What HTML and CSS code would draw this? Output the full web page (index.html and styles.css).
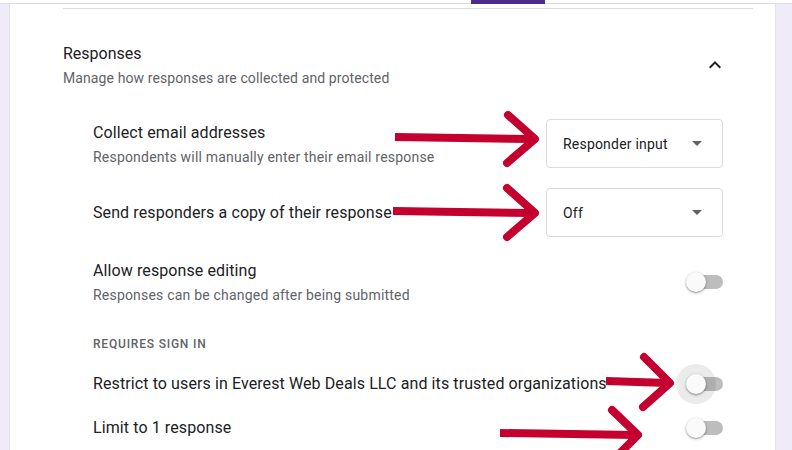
FILE: index.html
```html
<!DOCTYPE html>
<html>
<head>
  <title>Settings - Responses</title>
  <link rel="stylesheet" href="styles.css">
</head>
<body>
  <div class="topbar"><div class="tab-ink"></div></div>

  <div class="card">
    <div class="rule"></div>

    <div class="section-head">
      <div>
        <div class="title">Responses</div>
        <div class="sub">Manage how responses are collected and protected</div>
      </div>
      <svg class="chevron" width="24" height="24" viewBox="0 0 24 24"><path d="M12 8l-6 6 1.41 1.41L12 10.83l4.59 4.58L18 14z"/></svg>
    </div>

    <div class="row first">
      <div>
        <div class="label">Collect email addresses</div>
        <div class="sub wide">Respondents will manually enter their email response</div>
      </div>
      <div class="select"><span>Responder input</span><i class="caret"></i></div>
    </div>

    <div class="row">
      <div class="label">Send responders a copy of their response</div>
      <div class="select"><span>Off</span><i class="caret"></i></div>
    </div>

    <div class="row">
      <div>
        <div class="label">Allow response editing</div>
        <div class="sub wide">Responses can be changed after being submitted</div>
      </div>
      <div class="toggle"><div class="track"></div><div class="knob"></div></div>
    </div>

    <div class="group">Requires sign in</div>

    <div class="row tall">
      <div class="label">Restrict to users in Everest Web Deals LLC and its trusted organizations</div>
      <div class="toggle"><div class="track"></div><div class="halo"></div><div class="knob"></div></div>
    </div>

    <div class="row tall last">
      <div class="label">Limit to 1 response</div>
      <div class="toggle"><div class="track"></div><div class="knob"></div></div>
    </div>
  </div>

  <!-- annotation arrows drawn on top of the screenshot -->
  <svg class="arrows" width="792" height="450" viewBox="0 0 792 450">
    <g fill="none" stroke="#c4002f" stroke-width="8">
      <line x1="395" y1="137" x2="532" y2="139"/>
      <line x1="393" y1="211" x2="532" y2="213"/>
      <line x1="606" y1="381" x2="668" y2="383"/>
      <line x1="500" y1="433" x2="636" y2="435"/>
    </g>
    <g fill="none" stroke="#c4002f" stroke-width="8" stroke-linecap="round" stroke-linejoin="round">
      <polyline points="508,115 535,139 507,163"/>
      <polyline points="507,188 535,213 507,237"/>
      <polyline points="644,357 670,383 643,407"/>
      <polyline points="612,410 638,435 612,461"/>
    </g>
  </svg>
</body>
</html>
```

FILE: styles.css
```css
body {
  margin: 0;
  background-color: #f0ebf8;
  font-family: Roboto, "Noto Sans", sans-serif;
  color: #202124;
  position: relative;
  height: 450px;
  overflow: hidden;
}

.topbar {
  height: 3px;
  background-color: #fff;
  border-bottom: 1px solid #dadce0;
  display: flex;
}

.tab-ink {
  margin-left: 471px;
  width: 74px;
  height: 4px;
  background-color: #4b2c8c;
}

.card {
  margin-left: 9px;
  width: 767px;
  height: 446px;
  box-sizing: border-box;
  background-color: #fff;
  border-left: 1px solid #e3e1e8;
  border-right: 1px solid #e3e1e8;
  padding: 4px 22px 0 53px;
}

.rule {
  height: 1px;
  background-color: #dadce0;
}

.section-head {
  display: flex;
  align-items: center;
  justify-content: space-between;
  margin-top: 33px;
  margin-right: 26px;
}

.title {
  font-size: 16px;
  line-height: 24px;
}

.sub {
  font-size: 14px;
  line-height: 20px;
  color: #5f6368;
  margin-top: 2px;
  letter-spacing: 0.1px;
}

.sub.wide {
  letter-spacing: 0.2px;
}

.chevron {
  fill: #202124;
}

.row {
  display: flex;
  align-items: center;
  justify-content: space-between;
  margin: 20px 30px 0 30px;
  min-height: 49px;
}

.row.first {
  margin-top: 31px;
}

.row.tall {
  min-height: 40px;
  margin-top: 4px;
}

.group + .row.tall {
  margin-top: 12px;
}

.label {
  font-size: 16px;
  line-height: 24px;
  letter-spacing: 0.1px;
}

.select {
  width: 177px;
  height: 49px;
  box-sizing: border-box;
  border: 1px solid #dadce0;
  border-radius: 4px;
  display: flex;
  align-items: center;
  padding: 0 20px 0 16px;
  font-size: 14px;
  letter-spacing: 0.2px;
}

.caret {
  margin-left: auto;
  width: 0;
  height: 0;
  border-left: 5px solid transparent;
  border-right: 5px solid transparent;
  border-top: 5px solid #5f6368;
}

.group {
  margin: 30px 30px 0 30px;
  font-size: 12px;
  line-height: 16px;
  font-weight: 500;
  letter-spacing: 0.8px;
  text-transform: uppercase;
  color: #5f6368;
}

.toggle {
  position: relative;
  width: 37px;
  height: 20px;
  flex-shrink: 0;
}

.track {
  position: absolute;
  right: 0;
  top: 3px;
  width: 34px;
  height: 14px;
  border-radius: 7px;
  background-color: #bdbdbd;
}

.knob {
  position: absolute;
  left: 0;
  top: 0;
  width: 20px;
  height: 20px;
  border-radius: 50%;
  background-color: #fafafa;
  box-shadow: 0 1px 3px rgba(0, 0, 0, 0.35), 0 1px 1px rgba(0, 0, 0, 0.12);
}

.halo {
  position: absolute;
  left: -10px;
  top: -10px;
  width: 40px;
  height: 40px;
  border-radius: 50%;
  background-color: rgba(0, 0, 0, 0.08);
}

.arrows {
  position: absolute;
  left: 0;
  top: 0;
  pointer-events: none;
}
```
